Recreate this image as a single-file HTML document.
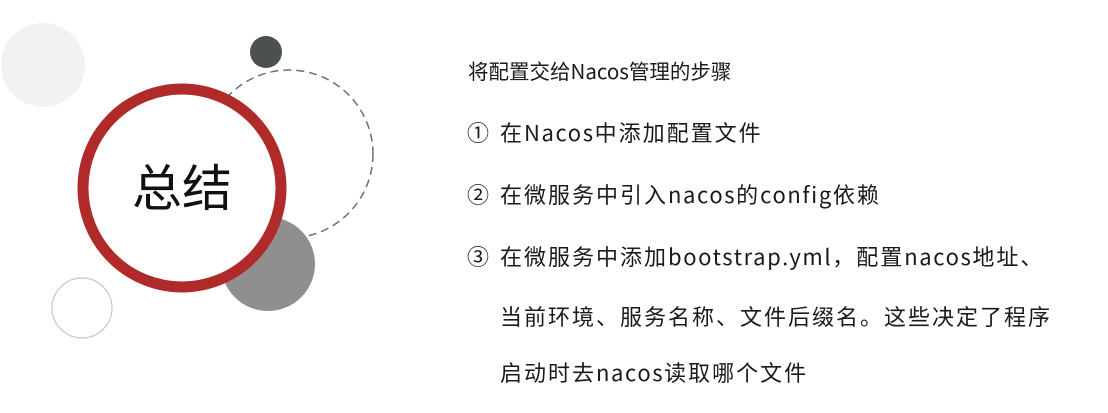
<!DOCTYPE html>
<html><head><meta charset="utf-8"><style>
html,body{margin:0;padding:0;background:#fff;width:1108px;height:413px;overflow:hidden;position:relative;font-family:"Noto Sans CJK SC",sans-serif;color:#1a1a1a}
.t{position:absolute;white-space:nowrap;line-height:1;}
.it{font-size:22px;letter-spacing:2px}
.it b{font-weight:normal;letter-spacing:1.6px}
.n{position:absolute;left:467px;font-size:22px;line-height:1}
</style></head><body>
<svg width="400" height="413" style="position:absolute;left:0;top:0">
<circle cx="43" cy="65" r="42" fill="#f2f2f2"/>
<circle cx="266" cy="52" r="16" fill="#4b5051"/>
<circle cx="289" cy="154" r="84" fill="none" stroke="#6e6e6e" stroke-width="1.5" stroke-dasharray="8 5"/>
<circle cx="268" cy="264" r="47" fill="#8f8f8f"/>
<circle cx="182" cy="188" r="99" fill="#fff" stroke="#b02a2a" stroke-width="11"/>
<circle cx="82" cy="308" r="30" fill="none" stroke="#c8c8c8" stroke-width="1.2"/>
<text x="182" y="206" text-anchor="middle" font-size="50" font-family="Noto Sans CJK SC, sans-serif" fill="#111">总结</text>
</svg>
<div class="t" style="left:468px;top:60px;font-size:20.5px">将配置交给Nacos管理的步骤</div>
<div class="n" style="top:121px">①</div>
<div class="t it" style="left:500px;top:121px">在<b>Nacos</b>中添加配置文件</div>
<div class="n" style="top:183px">②</div>
<div class="t it" style="left:500px;top:183px">在微服务中引入<b>nacos</b>的<b>config</b>依赖</div>
<div class="n" style="top:245px">③</div>
<div class="t it" style="left:500px;top:245px">在微服务中添加<b>bootstrap.yml</b>，配置<b>nacos</b>地址、</div>
<div class="t it" style="left:500px;top:305px">当前环境、服务名称、文件后缀名。这些决定了程序</div>
<div class="t it" style="left:500px;top:361px">启动时去<b>nacos</b>读取哪个文件</div>
</body></html>
